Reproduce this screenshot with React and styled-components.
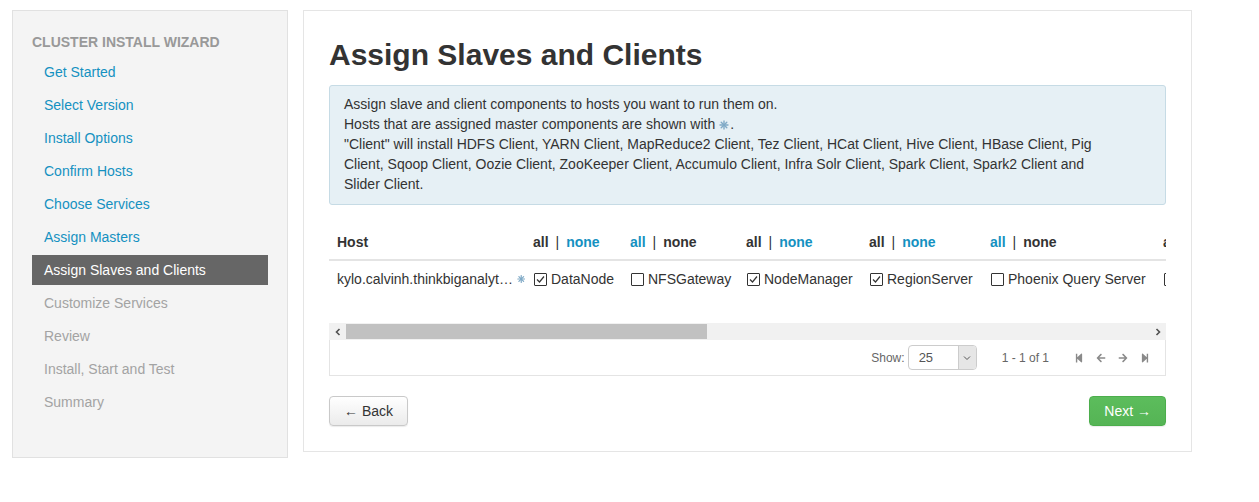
import React from "react";
import styled, { createGlobalStyle } from "styled-components";
import { FaStepBackward, FaStepForward, FaArrowLeft, FaArrowRight } from "react-icons/fa";

const Global = createGlobalStyle`
  html, body { margin: 0; padding: 0; background: #fff; }
  body { font-family: "Liberation Sans", Arial, sans-serif; color: #333; font-size: 14px; }
  * { box-sizing: border-box; }
`;

const Page = styled.div`
  display: flex;
  align-items: flex-start;
  gap: 15px;
  padding: 10px 0 0 12px;
`;

const Sidebar = styled.nav`
  width: 276px;
  height: 448px;
  background: #f4f4f4;
  border: 1px solid #e1e1e1;
  padding: 21px 19px 0 19px;
`;

const SideTitle = styled.div`
  font-size: 14px;
  font-weight: bold;
  color: #999;
  text-transform: uppercase;
  line-height: 20px;
  margin-bottom: 5px;
`;

const NavList = styled.ul`
  list-style: none;
  margin: 0;
  padding: 0;
  display: flex;
  flex-direction: column;
  gap: 3px;
`;

const NavItem = styled.li`
  height: 30px;
  line-height: 30px;
  padding-left: 12px;
  font-size: 14px;
  background: ${(p) => (p.$active ? "#666" : "transparent")};
  color: ${(p) => (p.$active ? "#fff" : p.$done ? "#1491c1" : "#a3a3a3")};
`;

const Main = styled.main`
  width: 889px;
  background: #fff;
  border: 1px solid #e5e5e5;
  padding: 26px 25px 25px 25px;
`;

const Title = styled.h2`
  margin: 0;
  font-size: 30px;
  line-height: 36px;
  font-weight: bold;
  color: #333;
`;

const InfoBox = styled.div`
  margin-top: 12px;
  background: #e6f0f5;
  border: 1px solid #c6dbe5;
  border-radius: 3px;
  padding: 8px 50px 10px 14px;
  line-height: 20px;
  font-size: 14px;
  color: #333;
`;

const Star = styled.svg`
  display: inline-block;
  width: 10px;
  height: 10px;
  vertical-align: ${(p) => p.$align || "-1px"};
  margin: ${(p) => p.$margin || "0 1px 0 4px"};
`;

const Asterisk = (props) => (
  <Star viewBox="0 0 10 10" {...props}>
    <g stroke="#7fa9c6" strokeWidth="1.4" strokeLinecap="round">
      <line x1="5" y1="1" x2="5" y2="9" />
      <line x1="1" y1="5" x2="9" y2="5" />
      <line x1="2.2" y1="2.2" x2="7.8" y2="7.8" />
      <line x1="7.8" y1="2.2" x2="2.2" y2="7.8" />
    </g>
  </Star>
);

const Viewport = styled.div`
  margin-top: 19px;
  height: 99px;
  overflow: hidden;
`;

const cols = "196px 97px 116px 123px 121px 173px 140px";

const Row = styled.div`
  display: grid;
  grid-template-columns: ${cols};
  width: 966px;
  height: ${(p) => (p.$head ? "37px" : "36px")};
  align-items: center;
  border-bottom: ${(p) => (p.$head ? "2px solid #e4e4e4" : "none")};
`;

const Cell = styled.div`
  padding-left: 8px;
  white-space: nowrap;
  overflow: hidden;
  font-size: 14px;
  font-weight: ${(p) => (p.$bold ? "bold" : "normal")};
  display: flex;
  align-items: center;
`;

const Toggle = styled.span`
  color: ${(p) => (p.$link ? "#1491c1" : "#333")};
  font-weight: bold;
`;

const Sep = styled.span`
  margin: 0 7px;
  font-weight: normal;
`;

const HostName = styled.span`
  display: inline-block;
  max-width: 180px;
  overflow: hidden;
  text-overflow: ellipsis;
  white-space: nowrap;
`;

const Box = styled.span`
  width: 13px;
  height: 13px;
  border: 1px solid #333;
  border-radius: 1px;
  margin: 0 4px 0 1px;
  display: inline-flex;
  align-items: center;
  justify-content: center;
  flex: none;
  background: #fff;
`;

const Check = ({ on }) => (
  <Box>
    {on && (
      <svg width="9" height="9" viewBox="0 0 9 9">
        <path d="M1 4.5 L3.5 7 L8 1.5" fill="none" stroke="#333" strokeWidth="1.2" />
      </svg>
    )}
  </Box>
);

const Scrollbar = styled.div`
  display: flex;
  height: 17px;
  background: #f1f1f1;
`;

const ScrollBtn = styled.div`
  width: 17px;
  display: flex;
  align-items: center;
  justify-content: center;
  flex: none;
`;

const Track = styled.div`
  flex: 1;
  display: flex;
  align-items: stretch;
  padding: 1px 0;
`;

const Thumb = styled.div`
  width: 361px;
  background: #c1c1c1;
`;

const Pager = styled.div`
  height: 36px;
  border: 1px solid #e4e4e4;
  border-top: none;
  display: flex;
  align-items: center;
  justify-content: flex-end;
  padding-right: 15px;
  font-size: 12px;
  color: #666;
`;

const ShowLabel = styled.span`
  margin-right: 3px;
`;

const Select = styled.div`
  width: 69px;
  height: 25px;
  border: 1px solid #ccc;
  border-radius: 4px;
  display: flex;
  overflow: hidden;
  background: #fff;
`;

const SelectValue = styled.span`
  flex: 1;
  padding-left: 10px;
  line-height: 23px;
  font-size: 13px;
  color: #555;
`;

const SelectBtn = styled.span`
  width: 18px;
  background: #e6e6e6;
  border-left: 1px solid #ccc;
  display: flex;
  align-items: center;
  justify-content: center;
`;

const Range = styled.span`
  margin: 0 25px 0 25px;
`;

const PageIcons = styled.div`
  display: flex;
  gap: 12px;
  align-items: center;
  color: #8a8a8a;
  font-size: 10px;
`;

const Actions = styled.div`
  margin-top: 20px;
  display: flex;
  justify-content: space-between;
`;

const Button = styled.button`
  height: 30px;
  padding: 0 14px;
  font-family: "Liberation Sans", Arial, sans-serif;
  font-size: 14px;
  border-radius: 4px;
  border: 1px solid ${(p) => (p.$primary ? "#4cae4c" : "#c9c9c9")};
  color: ${(p) => (p.$primary ? "#fff" : "#333")};
  background: ${(p) =>
    p.$primary
      ? "linear-gradient(#5cbd5c, #55b455)"
      : "linear-gradient(#ffffff, #ebebeb)"};
  box-shadow: 0 1px 1px rgba(0, 0, 0, 0.08);
`;

const steps = [
  ["Get Started", "done"],
  ["Select Version", "done"],
  ["Install Options", "done"],
  ["Confirm Hosts", "done"],
  ["Choose Services", "done"],
  ["Assign Masters", "done"],
  ["Assign Slaves and Clients", "active"],
  ["Customize Services", ""],
  ["Review", ""],
  ["Install, Start and Test", ""],
  ["Summary", ""],
];

const columns = [
  { label: "DataNode", on: true, allLink: false },
  { label: "NFSGateway", on: false, allLink: true },
  { label: "NodeManager", on: true, allLink: false },
  { label: "RegionServer", on: true, allLink: false },
  { label: "Phoenix Query Server", on: false, allLink: true },
  { label: "Client", on: false, allLink: false },
];

export default function App() {
  return (
    <>
      <Global />
      <Page>
        <Sidebar>
          <SideTitle>Cluster Install Wizard</SideTitle>
          <NavList>
            {steps.map(([s, st]) => (
              <NavItem key={s} $active={st === "active"} $done={st === "done"}>
                {s}
              </NavItem>
            ))}
          </NavList>
        </Sidebar>
        <Main>
          <Title>Assign Slaves and Clients</Title>
          <InfoBox>
            Assign slave and client components to hosts you want to run them on.
            <br />
            Hosts that are assigned master components are shown with
            <Asterisk />.
            <br />
            "Client" will install HDFS Client, YARN Client, MapReduce2 Client, Tez Client, HCat Client, Hive
            Client, HBase Client, Pig Client, Sqoop Client, Oozie Client, ZooKeeper Client, Accumulo Client,
            Infra Solr Client, Spark Client, Spark2 Client and Slider Client.
          </InfoBox>
          <Viewport>
            <Row $head>
              <Cell $bold>Host</Cell>
              {columns.map((c, i) => (
                <Cell key={i}>
                  <Toggle $link={c.allLink}>all</Toggle>
                  <Sep>|</Sep>
                  <Toggle $link={!c.allLink}>none</Toggle>
                </Cell>
              ))}
            </Row>
            <Row>
              <Cell>
                <HostName>kylo.calvinh.thinkbiganalytics.com</HostName>
                <Asterisk $margin="0 0 0 2px" $align="0" />
              </Cell>
              {columns.map((c, i) => (
                <Cell key={i}>
                  <Check on={c.on} />
                  {c.label}
                </Cell>
              ))}
            </Row>
          </Viewport>
          <Scrollbar>
            <ScrollBtn>
              <svg width="8" height="8" viewBox="0 0 8 8">
                <path d="M5.5 1 L2.5 4 L5.5 7" fill="none" stroke="#505050" strokeWidth="1.6" />
              </svg>
            </ScrollBtn>
            <Track>
              <Thumb />
            </Track>
            <ScrollBtn>
              <svg width="8" height="8" viewBox="0 0 8 8">
                <path d="M2.5 1 L5.5 4 L2.5 7" fill="none" stroke="#505050" strokeWidth="1.6" />
              </svg>
            </ScrollBtn>
          </Scrollbar>
          <Pager>
            <ShowLabel>Show:</ShowLabel>
            <Select>
              <SelectValue>25</SelectValue>
              <SelectBtn>
                <svg width="8" height="6" viewBox="0 0 8 6">
                  <path d="M1 1.5 L4 4.5 L7 1.5" fill="none" stroke="#555" strokeWidth="1" />
                </svg>
              </SelectBtn>
            </Select>
            <Range>1 - 1 of 1</Range>
            <PageIcons>
              <FaStepBackward />
              <FaArrowLeft />
              <FaArrowRight />
              <FaStepForward />
            </PageIcons>
          </Pager>
          <Actions>
            <Button>← Back</Button>
            <Button $primary>Next →</Button>
          </Actions>
        </Main>
      </Page>
    </>
  );
}
